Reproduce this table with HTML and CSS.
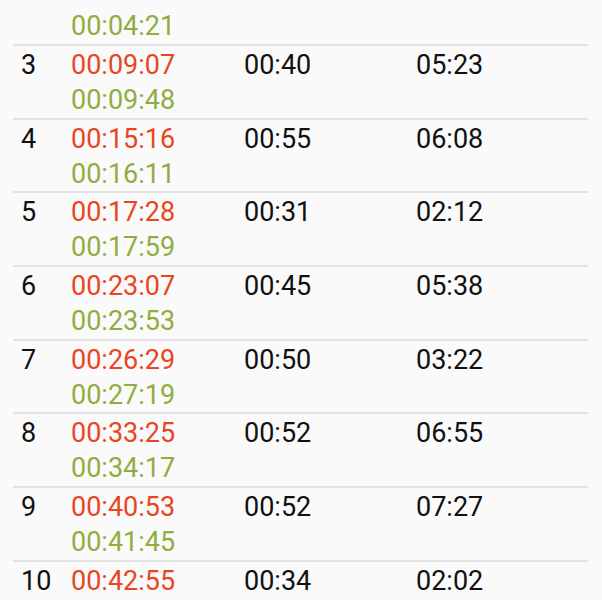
FILE: index.html
```html
<!DOCTYPE html>
<html>
<head>
<meta charset="utf-8">
<link rel="stylesheet" href="styles.css">
</head>
<body>
<div class="list">
  <div class="row"><div class="num">2</div><div class="times"><div class="start">00:03:44</div><div class="end">00:04:21</div></div><div class="dur">00:37</div><div class="gap">03:45</div></div>
  <div class="row"><div class="num">3</div><div class="times"><div class="start">00:09:07</div><div class="end">00:09:48</div></div><div class="dur">00:40</div><div class="gap">05:23</div></div>
  <div class="row"><div class="num">4</div><div class="times"><div class="start">00:15:16</div><div class="end">00:16:11</div></div><div class="dur">00:55</div><div class="gap">06:08</div></div>
  <div class="row"><div class="num">5</div><div class="times"><div class="start">00:17:28</div><div class="end">00:17:59</div></div><div class="dur">00:31</div><div class="gap">02:12</div></div>
  <div class="row"><div class="num">6</div><div class="times"><div class="start">00:23:07</div><div class="end">00:23:53</div></div><div class="dur">00:45</div><div class="gap">05:38</div></div>
  <div class="row"><div class="num">7</div><div class="times"><div class="start">00:26:29</div><div class="end">00:27:19</div></div><div class="dur">00:50</div><div class="gap">03:22</div></div>
  <div class="row"><div class="num">8</div><div class="times"><div class="start">00:33:25</div><div class="end">00:34:17</div></div><div class="dur">00:52</div><div class="gap">06:55</div></div>
  <div class="row"><div class="num">9</div><div class="times"><div class="start">00:40:53</div><div class="end">00:41:45</div></div><div class="dur">00:52</div><div class="gap">07:27</div></div>
  <div class="row"><div class="num">10</div><div class="times"><div class="start">00:42:55</div><div class="end">00:43:29</div></div><div class="dur">00:34</div><div class="gap">02:02</div></div>
</div>
</body>
</html>
```
FILE: styles.css
```css
html, body {
  margin: 0;
  padding: 0;
  background: #fafafa;
  overflow: hidden;
}
body {
  font-family: Roboto, "Noto Sans", sans-serif;
  font-size: 27px;
  color: #111;
}
.list {
  margin: -27.7px 14px 0 13px;
}
.row {
  display: grid;
  grid-template-columns: 50px 173px 172px 1fr;
  padding: 2px 0 0 8px;
  line-height: 34.85px;
  border-bottom: 2px solid #e2e2e2;
}
.start { color: #e9461f; }
.end { color: #90ad40; }
```
